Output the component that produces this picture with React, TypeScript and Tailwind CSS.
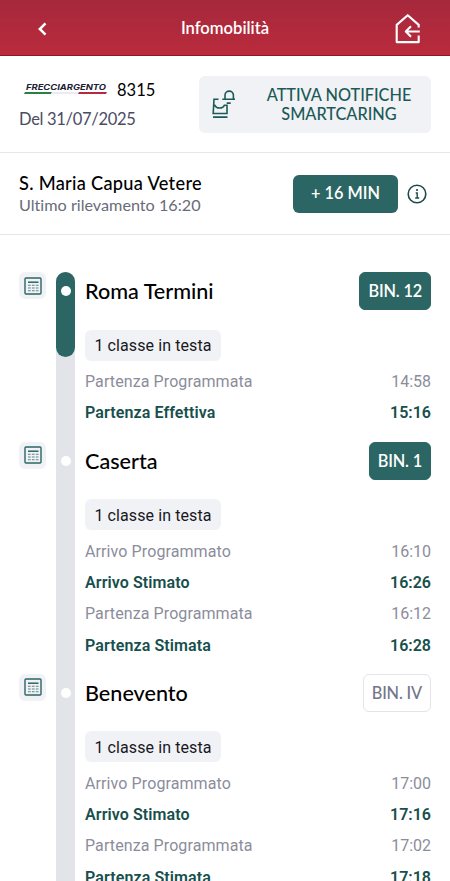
import React from 'react';
import { clsx } from 'clsx';

interface StopTime {
  label: string;
  time: string;
  actual?: boolean;
}

interface Stop {
  name: string;
  platform: string;
  confirmed: boolean;
  passed?: boolean;
  times: StopTime[];
}

const stops: Stop[] = [
  {
    name: 'Roma Termini',
    platform: 'BIN. 12',
    confirmed: true,
    passed: true,
    times: [
      { label: 'Partenza Programmata', time: '14:58' },
      { label: 'Partenza Effettiva', time: '15:16', actual: true }
    ]
  },
  {
    name: 'Caserta',
    platform: 'BIN. 1',
    confirmed: true,
    times: [
      { label: 'Arrivo Programmato', time: '16:10' },
      { label: 'Arrivo Stimato', time: '16:26', actual: true },
      { label: 'Partenza Programmata', time: '16:12' },
      { label: 'Partenza Stimata', time: '16:28', actual: true }
    ]
  },
  {
    name: 'Benevento',
    platform: 'BIN. IV',
    confirmed: false,
    times: [
      { label: 'Arrivo Programmato', time: '17:00' },
      { label: 'Arrivo Stimato', time: '17:16', actual: true },
      { label: 'Partenza Programmata', time: '17:02' },
      { label: 'Partenza Stimata', time: '17:18', actual: true }
    ]
  }
];

function BackIcon() {
  return (
    <svg className="w-3 h-4" viewBox="0 0 12 16" fill="none" stroke="currentColor" strokeWidth="2.5">
      <path d="M9.5 2.3 3.8 8l5.7 5.7" />
    </svg>
  );
}

function HomeIcon() {
  return (
    <svg className="w-7 h-8" viewBox="0 0 28 32" fill="none" stroke="currentColor" strokeWidth="2.1" strokeLinejoin="round">
      <path d="M24.7 15.5v-2.6L13.7 3.2 2.7 12.9v17.2h22v-6.7" />
      <path d="M25.8 19.5H11.8M17 14.3l-5.2 5.2 5.2 5.2" />
    </svg>
  );
}

function SmartCaringIcon() {
  return (
    <svg className="w-6 h-7" viewBox="0 0 24 28" fill="none" stroke="currentColor" strokeWidth="1.6">
      <path d="M7.5 9.3H3L2.2 23.5H16V15.2h-2.6c-1.6 3.8-8 3.8-9.6 0H2.6M2 27.1h14.5" />
      <path d="M11.3 9.3H24M14 9.3V5.3a4.2 4.2 0 0 1 8.4 0v4M15.7 13.1h4" />
    </svg>
  );
}

function InfoIcon() {
  return (
    <svg className="w-5 h-5" viewBox="0 0 20 20" fill="none" stroke="currentColor">
      <circle cx="10" cy="10" r="8.8" strokeWidth="1.6" />
      <path d="M8.7 9h1.5v5M8.2 14h4" strokeWidth="1.4" />
      <circle cx="10" cy="6" r="1.1" fill="currentColor" stroke="none" />
    </svg>
  );
}

function TimetableIcon() {
  return (
    <svg className="w-[18px] h-[18px]" viewBox="0 0 18 18" fill="none" stroke="#2b6664">
      <rect x="1" y="1" width="16" height="16" rx="1" strokeWidth="1.4" />
      <path d="M4 5.2h10.5" strokeWidth="1.5" />
      <path d="M4 8.3h10.5M4 11h10.5M4 13.7h10.5" stroke="#5b8786" strokeWidth="1.1" strokeDasharray="2.7 1.2" />
    </svg>
  );
}

function TrainLogo() {
  return (
    <svg className="w-[84px] h-3.5" viewBox="0 0 84 14">
      <text
        x="2"
        y="7"
        fontFamily="Inter, sans-serif"
        fontSize="7.8"
        fontWeight="700"
        fontStyle="italic"
        textLength="80"
        lengthAdjust="spacingAndGlyphs"
        fill="#1b2233"
      >
        FRECCIARGENTO
      </text>
      <path d="M1 9h27l-1 2H0z" fill="#2d7d46" />
      <path d="M28 9h27l-1 2H27z" fill="#ececf0" />
      <path d="M55 9h28l-1 2H54z" fill="#b52a40" />
    </svg>
  );
}

function StopRow({ stop }: { stop: Stop }) {
  return (
    <div className={clsx('flex', stop.passed ? 'h-[169.5px]' : 'h-[232px]')}>
      <div className="w-[27px] h-[27px] rounded-md bg-[#f1f2f6] flex items-center justify-center">
        <TimetableIcon />
      </div>
      <div className={clsx('ml-2.5 w-[19px] bg-[#e3e4ea]', stop.passed && 'rounded-t-[10px]')}>
        <div
          className={clsx(
            'w-full flex justify-center pt-[14px]',
            stop.passed && 'h-[85px] rounded-[10px] bg-[#2b6664]'
          )}
        >
          <div className="w-2.5 h-2.5 rounded-full bg-white" />
        </div>
      </div>
      <div className="ml-2.5 flex-1">
        <div className="flex items-center justify-between h-[38px]">
          <h2 className="pt-px text-[21.6px] font-medium text-black">{stop.name}</h2>
          <span
            className={clsx(
              'h-[38px] px-2 pt-px rounded-md border flex items-center text-[16.3px] tracking-[-0.15px]',
              stop.confirmed
                ? 'bg-[#2b6664] border-[#2b6664] text-white font-semibold'
                : 'bg-white border-[#e3e4ea] text-[#73768a] font-medium'
            )}
          >
            {stop.platform}
          </span>
        </div>
        <div className="mt-[19.5px] w-[136px] h-[31px] rounded-md bg-[#f1f2f6] flex items-center justify-center pt-0.5 font-[Roboto] text-base tracking-[0.1px] text-[#18181c]">
          1 classe in testa
        </div>
        <div className="mt-[6px] font-[Roboto] text-base">
          {stop.times.map((row) => (
            <div
              key={row.label}
              className={clsx(
                'flex items-center justify-between h-[31.3px]',
                row.actual ? 'font-semibold text-[#174f4c]' : 'text-[#8b8d9b]'
              )}
            >
              <span className="tracking-[0.1px]">{row.label}</span>
              <span>{row.time}</span>
            </div>
          ))}
        </div>
      </div>
    </div>
  );
}

export default function App() {
  return (
    <div className="w-[450px] h-[881px] overflow-hidden bg-white font-[Lato,sans-serif] [font-variant-ligatures:none]">
      <header className="h-14 pl-9 pr-7 flex items-center bg-linear-to-b from-[#a6283c] to-[#b92b3c] border-b border-[#8f1728] text-white">
        <div className="w-5 pt-0.5">
          <BackIcon />
        </div>
        <h1 className="flex-1 pr-7 pl-7 text-center text-[16.6px] font-semibold pt-0.5">Infomobilità</h1>
        <HomeIcon />
      </header>

      <section className="h-[97px] px-[19px] flex items-center justify-between border-b border-[#e6e6e8]">
        <div>
          <div className="flex items-center pl-[5px] gap-[9px]">
            <TrainLogo />
            <span className="pt-0.5 text-[16.5px] leading-[29px] text-black">8315</span>
          </div>
          <div className="text-[16.5px] leading-[29px] tracking-[-0.3px] text-[#4a4c62]">Del 31/07/2025</div>
        </div>
        <button className="w-[232px] h-[57px] rounded-md bg-[#f1f2f6] flex items-center pl-3 text-[#1c5a57]">
          <SmartCaringIcon />
          <span className="flex-1 pl-3 text-center text-[16.3px] leading-[19px] font-medium">
            ATTIVA NOTIFICHE
            <br />
            SMARTCARING
          </span>
        </button>
      </section>

      <section className="h-[82px] pl-[19px] pr-[23px] flex items-center justify-between border-b border-[#e6e6e8]">
        <div>
          <div className="text-[18.2px] leading-[22px] tracking-[0.3px] font-medium text-black">S. Maria Capua Vetere</div>
          <div className="text-[16.2px] leading-[21px] text-[#696b78]">Ultimo rilevamento 16:20</div>
        </div>
        <div className="flex items-center gap-[9px]">
          <span className="w-[105px] h-[38px] rounded-md bg-[#2b6664] flex items-center justify-center text-[16.3px] font-semibold text-white">
            + 16 MIN
          </span>
          <span className="text-[#1c4a4a]">
            <InfoIcon />
          </span>
        </div>
      </section>

      <main className="pt-[37px] px-[19px]">
        {stops.map((stop) => (
          <StopRow key={stop.name} stop={stop} />
        ))}
      </main>
    </div>
  );
}
